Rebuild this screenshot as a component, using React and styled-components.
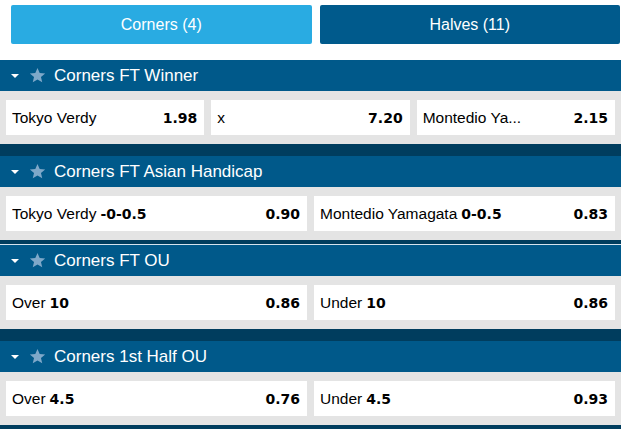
import styled, { createGlobalStyle } from "styled-components";

const GlobalStyle = createGlobalStyle`
  html, body {
    margin: 0;
    padding: 0;
    background: #ffffff;
  }
  body {
    font-family: "Liberation Sans", Arial, sans-serif;
  }
`;

const Container = styled.div`
  width: 621px;
  height: 429px;
  overflow: hidden;
  background: #ffffff;
`;

const Tabs = styled.div`
  display: flex;
  gap: 8px;
  padding: 5px 1px 16px 11px;
`;

const Tab = styled.div`
  flex: 1;
  height: 39px;
  display: flex;
  align-items: center;
  justify-content: center;
  border-radius: 2px;
  background: ${(props) => (props.$active ? "#29abe2" : "#005a8c")};
  color: #ffffff;
  font-size: 16px;
  cursor: pointer;
`;

const Board = styled.div`
  background: #003d5e;
  padding-bottom: 10px;
`;

const Market = styled.section`
  margin-top: ${(props) => props.$gap || 0}px;
  border-top: ${(props) => (props.$divider ? "1px solid #d5e3ed" : "none")};
`;

const MarketHeader = styled.div`
  height: 31px;
  display: flex;
  align-items: center;
  padding-left: 11px;
  background: #00598a;
  color: #ffffff;
  font-size: 17px;
`;

const Caret = styled.span`
  width: 0;
  height: 0;
  border-left: 4px solid transparent;
  border-right: 4px solid transparent;
  border-top: 4px solid #ffffff;
  margin-right: 10px;
`;

const StarIcon = styled.svg`
  width: 17px;
  height: 17px;
  margin-right: 8px;
  fill: #7ea8c9;
`;

const Selections = styled.div`
  display: grid;
  grid-template-columns: repeat(${(props) => props.$cols}, 1fr);
  gap: 7px;
  padding: 9px 6px;
  background: #e4e4e4;
`;

const Selection = styled.div`
  height: 35px;
  min-width: 0;
  display: flex;
  align-items: center;
  gap: 8px;
  padding: 0 7px 0 6px;
  background: #ffffff;
  cursor: pointer;
`;

const Label = styled.span`
  flex: 1;
  min-width: 0;
  white-space: nowrap;
  overflow: hidden;
  font-size: 15.5px;
  color: #000000;
`;

const Line = styled.b`
  font-family: "DejaVu Sans", Verdana, sans-serif;
  font-weight: bold;
  font-size: 14px;
  margin-left: 4px;
`;

const Odds = styled.span`
  font-family: "DejaVu Sans", Verdana, sans-serif;
  font-weight: bold;
  font-size: 14px;
  color: #000000;
`;

const Star = () => (
  <StarIcon viewBox="0 0 24 24">
    <path d="M12 1.5l3.1 7.1 7.7.6-5.9 5 1.8 7.5L12 17.7l-6.7 4 1.8-7.5-5.9-5 7.7-.6z" />
  </StarIcon>
);

const markets = [
  {
    title: "Corners FT Winner",
    gap: 0,
    items: [
      { name: "Tokyo Verdy", odds: "1.98" },
      { name: "x", odds: "7.20" },
      { name: "Montedio Ya...", odds: "2.15" },
    ],
  },
  {
    title: "Corners FT Asian Handicap",
    gap: 12,
    items: [
      { name: "Tokyo Verdy", line: "-0-0.5", odds: "0.90" },
      { name: "Montedio Yamagata", line: "0-0.5", odds: "0.83" },
    ],
  },
  {
    title: "Corners FT OU",
    gap: 4,
    divider: true,
    items: [
      { name: "Over", line: "10", odds: "0.86" },
      { name: "Under", line: "10", odds: "0.86" },
    ],
  },
  {
    title: "Corners 1st Half OU",
    gap: 12,
    items: [
      { name: "Over", line: "4.5", odds: "0.76" },
      { name: "Under", line: "4.5", odds: "0.93" },
    ],
  },
];

const App = () => {
  return (
    <Container>
      <GlobalStyle />
      <Tabs>
        <Tab $active>Corners (4)</Tab>
        <Tab>Halves (11)</Tab>
      </Tabs>
      <Board>
        {markets.map((market) => (
          <Market key={market.title} $gap={market.gap} $divider={market.divider}>
            <MarketHeader>
              <Caret />
              <Star />
              {market.title}
            </MarketHeader>
            <Selections $cols={market.items.length}>
              {market.items.map((item, i) => (
                <Selection key={i}>
                  <Label>
                    {item.name}
                    {item.line && <Line>{item.line}</Line>}
                  </Label>
                  <Odds>{item.odds}</Odds>
                </Selection>
              ))}
            </Selections>
          </Market>
        ))}
      </Board>
    </Container>
  );
};

export default App;
